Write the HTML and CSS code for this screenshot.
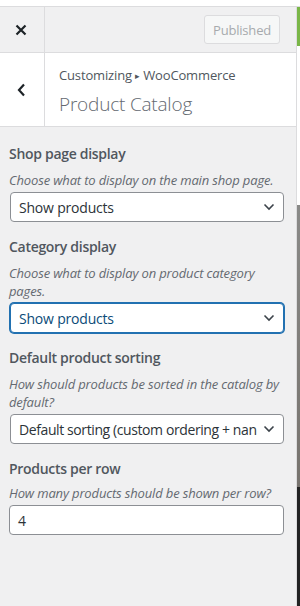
FILE: index.html
```html
<!DOCTYPE html>
<html>
<head>
    <link rel="stylesheet" href="styles.css">
</head>
<body>
<div class="topgap"></div>
<div class="frame">
  <div class="sidebar">
    <div class="actions">
      <button class="close" aria-label="Close">
        <svg width="12" height="12" viewBox="0 0 12 12"><path d="M1.5 1.5 L10.5 10.5 M10.5 1.5 L1.5 10.5" stroke="#1d2327" stroke-width="2.2" fill="none"/></svg>
      </button>
      <button class="published" disabled>Published</button>
    </div>
    <div class="section-head">
      <button class="back" aria-label="Back">
        <svg width="9" height="14" viewBox="0 0 9 14"><path d="M7 1.5 L2 7 L7 12.5" stroke="#1d2327" stroke-width="2.2" fill="none"/></svg>
      </button>
      <div class="titles">
        <div class="crumb">Customizing <span class="arrow">&#9656;</span> WooCommerce</div>
        <div class="title">Product Catalog</div>
      </div>
    </div>
    <div class="controls">
      <div class="control">
        <div class="label">Shop page display</div>
        <div class="desc">Choose what to display on the main shop page.</div>
        <div class="select"><span>Show products</span><svg width="12" height="8" viewBox="0 0 12 8"><path d="M1.5 1.5 L6 6 L10.5 1.5" stroke="#3c434a" stroke-width="1.6" fill="none"/></svg></div>
      </div>
      <div class="control">
        <div class="label">Category display</div>
        <div class="desc">Choose what to display on product category pages.</div>
        <div class="select focus"><span>Show products</span><svg width="12" height="8" viewBox="0 0 12 8"><path d="M1.5 1.5 L6 6 L10.5 1.5" stroke="#3c434a" stroke-width="1.6" fill="none"/></svg></div>
      </div>
      <div class="control">
        <div class="label">Default product sorting</div>
        <div class="desc">How should products be sorted in the catalog by default?</div>
        <div class="select tight"><span>Default sorting (custom ordering + nan</span><svg width="12" height="8" viewBox="0 0 12 8"><path d="M1.5 1.5 L6 6 L10.5 1.5" stroke="#3c434a" stroke-width="1.6" fill="none"/></svg></div>
      </div>
      <div class="control">
        <div class="label">Products per row</div>
        <div class="desc">How many products should be shown per row?</div>
        <div class="input">4</div>
      </div>
    </div>
  </div>
  <div class="preview">
    <div class="p-green"></div>
    <div class="p-white"></div>
    <div class="p-gray"></div>
    <div class="p-dark"></div>
  </div>
</div>
</body>
</html>
```

FILE: styles.css
```css
body {
  margin: 0;
  background: #fff;
  font-family: "Open Sans", sans-serif;
  color: #50575e;
}

.topgap {
  height: 6px;
  background: #fff;
}

.frame {
  display: flex;
  height: 600px;
  border-top: 1px solid #dcdcde;
}

.sidebar {
  width: 296px;
  border-right: 1px solid #dcdcde;
  background: #f0f0f1;
  flex-shrink: 0;
}

.actions {
  display: flex;
  align-items: center;
  height: 45px;
  border-bottom: 1px solid #dcdcde;
  background: #f0f0f1;
}

.close, .back {
  width: 45px;
  height: 100%;
  border: 0;
  border-right: 1px solid #dcdcde;
  background: transparent;
  display: flex;
  align-items: center;
  justify-content: center;
  padding: 0 2px 0 0;
}

.published {
  margin-left: auto;
  margin-right: 16px;
  height: 29px;
  padding: 0 8px;
  border: 1px solid #dcdcde;
  border-radius: 3px;
  background: #f6f7f7;
  color: #a7aaad;
  font-family: inherit;
  font-size: 13px;
  letter-spacing: -0.2px;
}

.section-head {
  display: flex;
  height: 73px;
  background: #fff;
  border-bottom: 1px solid #dcdcde;
}

.titles {
  padding: 13px 14px 0 14px;
}

.crumb {
  font-size: 13px;
  line-height: 18px;
  letter-spacing: -0.15px;
  color: #50575e;
}

.arrow {
  font-size: 9px;
  vertical-align: 1px;
}

.title {
  font-size: 19px;
  font-weight: 300;
  line-height: 30px;
  margin-top: 4px;
  letter-spacing: -0.2px;
  color: #646970;
}

.controls {
  padding: 17px 12px 0 9px;
}

.control {
  margin-bottom: 15px;
}

.control:last-child .label {
  margin-top: 2px;
  margin-bottom: 5px;
}

.label {
  font-size: 14px;
  font-weight: 600;
  line-height: 20px;
  margin-bottom: 7px;
  letter-spacing: -0.3px;
  color: #50575e;
}

.desc {
  font-size: 13px;
  font-style: italic;
  line-height: 18px;
  margin-bottom: 3px;
  letter-spacing: -0.15px;
  color: #646970;
}

.select, .input {
  display: flex;
  align-items: center;
  height: 28px;
  box-sizing: content-box;
  border: 1px solid #8c8f94;
  border-radius: 4px;
  background: #fff;
  font-size: 14px;
  letter-spacing: -0.2px;
  color: #2c3338;
  padding: 0 8px;
}

.select {
  margin-left: 1px;
  width: 256px;
  justify-content: space-between;
}

.select span {
  white-space: nowrap;
  overflow: hidden;
  flex: 1;
}

.select.tight {
  letter-spacing: -0.4px;
}

.select svg {
  flex-shrink: 0;
  margin-left: 4px;
}

.select.focus {
  border-color: #2271b1;
  box-shadow: 0 0 0 1px #2271b1;
  color: #0a4b78;
}

.input {
  width: 257px;
}

.preview {
  flex: 1;
  display: flex;
  flex-direction: column;
}

.p-green {
  height: 39px;
  background: #7ab648;
}

.p-white {
  height: 159px;
  background: #fff;
}

.p-gray {
  height: 282px;
  background: linear-gradient(#8a8a88, #77736e);
}

.p-dark {
  flex: 1;
  background: #232323;
}
```
